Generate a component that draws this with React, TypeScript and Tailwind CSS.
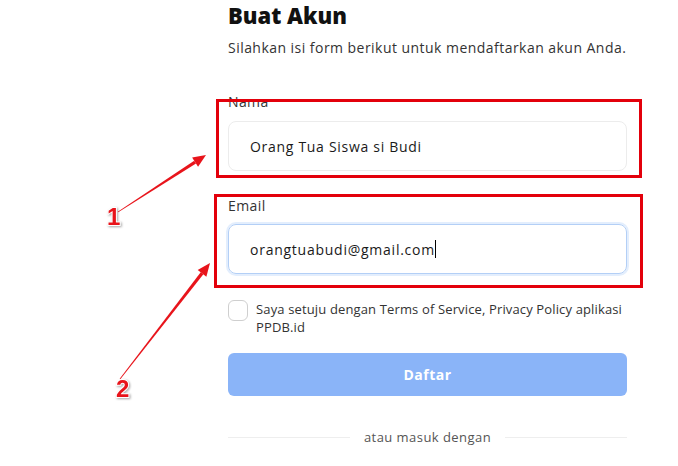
import React from "react";

/** Ujung panah anotasi: garis meruncing + kepala segitiga */
function Arrow({ x1, y1, x2, y2 }: { x1: number; y1: number; x2: number; y2: number }) {
  const dx = x2 - x1;
  const dy = y2 - y1;
  const len = Math.hypot(dx, dy);
  const ux = dx / len;
  const uy = dy / len;
  const nx = -uy;
  const ny = ux;
  const head = 13;
  const hw = 5.5;
  const sw = 1.7;
  const bx = x2 - ux * head;
  const by = y2 - uy * head;
  const shaft = [
    [x1 + nx * 0.4, y1 + ny * 0.4],
    [bx + nx * sw, by + ny * sw],
    [bx - nx * sw, by - ny * sw],
    [x1 - nx * 0.4, y1 - ny * 0.4],
  ];
  const tip = [
    [x2, y2],
    [bx + nx * hw, by + ny * hw],
    [bx - nx * hw, by - ny * hw],
  ];
  const pts = (p: number[][]) => p.map((q) => q.join(",")).join(" ");
  return (
    <g>
      <polygon points={pts(shaft)} fill="#e8141b" />
      <polygon points={pts(tip)} fill="#e8141b" />
    </g>
  );
}

export default function App() {
  return (
    <div className="relative w-[678px] h-[466px] overflow-hidden bg-white font-['Open_Sans',sans-serif]">
      <div className="flex">
        <div className="w-[228px] shrink-0" />
        <div className="w-[399px] flex flex-col">
          <h1 className="text-[22px] leading-[30px] font-extrabold text-[#111]">Buat Akun</h1>
          <p className="mt-[8px] whitespace-nowrap text-[14px] leading-[20px] tracking-[0.46px] text-[#333]">
            Silahkan isi form berikut untuk mendaftarkan akun Anda.
          </p>

          <label className="mt-[34px] text-[14px] leading-[20px] tracking-[0.4px] text-[#333]">Nama</label>
          <div className="mt-[9px] h-[50px] rounded-[8px] border border-[#ececec] flex items-center pl-[21px] text-[14px] tracking-[0.7px] font-medium text-[#1a1a1a]">
            Orang Tua Siswa si Budi
          </div>

          <label className="mt-[25px] text-[14px] leading-[20px] tracking-[0.4px] text-[#333]">Email</label>
          <div className="mt-[8px] h-[50px] rounded-[8px] border border-[#b3cff6] ring-2 ring-[#e3eefd] flex items-center pl-[21px] text-[14px] tracking-[0.75px] font-medium text-[#1a1a1a]">
            orangtuabudi@gmail.com
            <span className="w-[1px] h-[18px] bg-black" />
          </div>

          <div className="mt-[26px] flex gap-[8px]">
            <div className="w-[20px] h-[21px] shrink-0 rounded-[6px] border border-[#cfcfcf]" />
            <p className="text-[13px] leading-[18px] tracking-[0.14px] text-[#333]">
              Saya setuju dengan Terms of Service, Privacy Policy aplikasi PPDB.id
            </p>
          </div>

          <button className="mt-[17px] h-[43px] rounded-[6px] bg-[#8ab4f8] text-white text-[14px] tracking-[0.5px] font-bold">
            Daftar
          </button>

          <div className="mt-[32px] flex items-center gap-[14px]">
            <div className="flex-1 h-px bg-[#eeeeee]" />
            <span className="text-[13px] leading-[18px] tracking-[0.45px] text-[#555]">atau masuk dengan</span>
            <div className="flex-1 h-px bg-[#eeeeee]" />
          </div>
        </div>
      </div>

      {/* anotasi */}
      <div className="absolute left-[216px] top-[99px] w-[426px] h-[79px] border-[3px] border-[#e3000b]" />
      <div className="absolute left-[214px] top-[194px] w-[429px] h-[94px] border-[3px] border-[#e3000b]" />
      <svg className="absolute inset-0 pointer-events-none" width="678" height="466">
        <Arrow x1={118} y1={212} x2={206} y2={155} />
        <Arrow x1={120} y1={379} x2={210} y2={263} />
        <text
          x={107}
          y={225}
          fontFamily="Liberation Sans, sans-serif"
          fontWeight="bold"
          fontSize={24}
          fill="#e8141b"
          stroke="#fff"
          strokeWidth={2}
          paintOrder="stroke"
          style={{ filter: "drop-shadow(1px 1px 1px rgba(0,0,0,0.35))" }}
        >
          1
        </text>
        <text
          x={116}
          y={397}
          fontFamily="Liberation Sans, sans-serif"
          fontWeight="bold"
          fontSize={24}
          fill="#e8141b"
          stroke="#fff"
          strokeWidth={2}
          paintOrder="stroke"
          style={{ filter: "drop-shadow(1px 1px 1px rgba(0,0,0,0.35))" }}
        >
          2
        </text>
      </svg>
    </div>
  );
}
